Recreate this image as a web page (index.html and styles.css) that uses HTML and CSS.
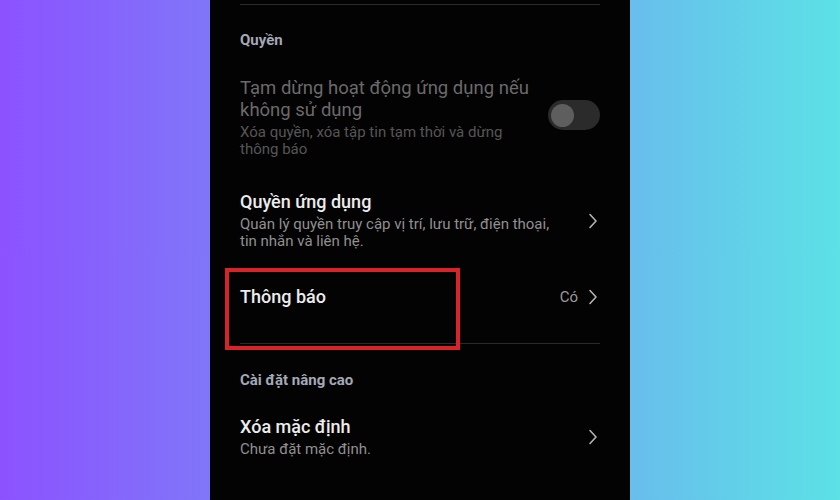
FILE: index.html
```html
<!DOCTYPE html>
<html lang="vi">
<head>
<meta charset="utf-8">
<title>Thông tin ứng dụng</title>
<link rel="stylesheet" href="styles.css">
</head>
<body>
<div class="stage">
  <div class="phone">
    <div class="divider first"></div>
    <div class="header">Quyền</div>

    <div class="item disabled">
      <div class="text">
        <div class="title">Tạm dừng hoạt động ứng dụng nếu<br>không sử dụng</div>
        <div class="sub">Xóa quyền, xóa tập tin tạm thời và dừng<br>thông báo</div>
      </div>
      <div class="toggle"><span class="knob"></span></div>
    </div>

    <div class="item perms">
      <div class="text">
        <div class="title">Quyền ứng dụng</div>
        <div class="sub">Quản lý quyền truy cập vị trí, lưu trữ, điện thoại,<br>tin nhắn và liên hệ.</div>
      </div>
      <svg class="chev" viewBox="0 0 10 16" width="10" height="16"><path d="M2 1.5 L8 8 L2 14.5" fill="none" stroke="#b4b4b4" stroke-width="1.6" stroke-linecap="round" stroke-linejoin="round"/></svg>
    </div>

    <div class="item notif">
      <div class="text">
        <div class="title">Thông báo</div>
      </div>
      <span class="value">Có</span>
      <svg class="chev" viewBox="0 0 10 16" width="10" height="16"><path d="M2 1.5 L8 8 L2 14.5" fill="none" stroke="#b4b4b4" stroke-width="1.6" stroke-linecap="round" stroke-linejoin="round"/></svg>
    </div>

    <div class="divider mid"></div>
    <div class="header adv">Cài đặt nâng cao</div>

    <div class="item reset">
      <div class="text">
        <div class="title">Xóa mặc định</div>
        <div class="sub">Chưa đặt mặc định.</div>
      </div>
      <svg class="chev" viewBox="0 0 10 16" width="10" height="16"><path d="M2 1.5 L8 8 L2 14.5" fill="none" stroke="#b4b4b4" stroke-width="1.6" stroke-linecap="round" stroke-linejoin="round"/></svg>
    </div>

    <div class="highlight"></div>
  </div>
</div>
</body>
</html>
```

FILE: styles.css
```css
html, body {
  margin: 0;
  padding: 0;
}
body {
  width: 840px;
  height: 500px;
  overflow: hidden;
  background: linear-gradient(90deg, #8c52ff 0%, #5ce1e6 100%);
  font-family: Roboto, "Noto Sans", "Liberation Sans", sans-serif;
}
.stage {
  display: flex;
  justify-content: center;
  height: 500px;
}
.phone {
  position: relative;
  width: 420px;
  height: 500px;
  background: #030303;
  box-sizing: border-box;
  padding: 0 30px;
  display: flex;
  flex-direction: column;
}
.divider {
  height: 1px;
  background: #2a2a2d;
  flex: none;
}
.divider.first { margin-top: 4px; }
.divider.mid { margin-top: 35px; }

.header {
  margin-top: 25px;
  font-size: 15px;
  line-height: 20px;
  font-weight: 700;
  color: #a5a8b6;
}
.header.adv { margin-top: 26px; }

.item {
  display: flex;
  align-items: center;
}
.item .text {
  flex: 1;
  min-width: 0;
}
.title {
  font-size: 18px;
  line-height: 22px;
  font-weight: 500;
  color: #ececec;
}
.sub {
  margin-top: 3px;
  font-size: 15px;
  line-height: 17px;
  color: #909090;
}
.item.disabled { margin-top: 27px; }
.item.disabled .title {
  font-weight: 400;
  color: #6a6a6a;
  font-size: 18.5px;
}
.item.disabled .sub { color: #565656; }
.item.perms { margin-top: 33px; }
.item.notif { margin-top: 36px; }
.item.reset { margin-top: 26px; }

.chev {
  flex: none;
  margin-left: 8px;
  margin-right: 2px;
}
.value {
  font-size: 15px;
  color: #9c9c9c;
  margin-right: 2px;
}

.toggle {
  flex: none;
  width: 52px;
  height: 30px;
  border-radius: 15px;
  background: #2b2b2b;
  margin-top: -5px;
  display: flex;
  align-items: center;
  padding-left: 3px;
  box-sizing: border-box;
}
.knob {
  width: 23px;
  height: 23px;
  border-radius: 50%;
  background: #5e5e5e;
}

.highlight {
  position: absolute;
  left: 15px;
  top: 268px;
  width: 235px;
  height: 82px;
  box-sizing: border-box;
  border: 4px solid #d8232a;
}
```
